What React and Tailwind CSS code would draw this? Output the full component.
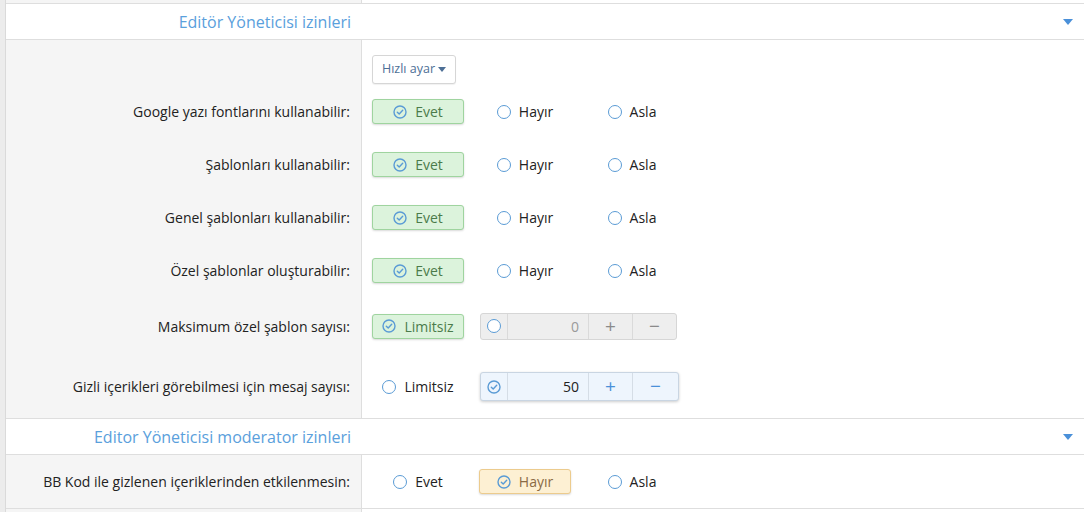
import React from 'react';

const CheckCircle = ({ color = '#5a9bd5' }) => (
    <svg width="14" height="14" viewBox="0 0 14 14" fill="none">
        <circle cx="7" cy="7" r="6" stroke={color} strokeWidth="1.4" />
        <path d="M4.3 7.2 L6.2 9 L9.7 5.3" stroke={color} strokeWidth="1.4" strokeLinecap="round" strokeLinejoin="round" />
    </svg>
);

const Radio = () => (
    <span className="inline-block w-[14px] h-[14px] rounded-full border-[1.5px] border-[#5a9bd5] bg-white" />
);

const Option = ({ label, state }) => {
    if (state === 'yes') {
        return (
            <div className="min-w-[92px] h-[25px] px-[8px] flex items-center justify-center gap-[8px] rounded-[3px] border border-[#9fd49f] bg-[#dcf3dc] text-[#4b7b4b] shadow-[0_1px_2px_rgba(0,0,0,0.15)]">
                <CheckCircle />
                <span>{label}</span>
            </div>
        );
    }
    if (state === 'no') {
        return (
            <div className="min-w-[92px] h-[25px] px-[8px] flex items-center justify-center gap-[8px] rounded-[3px] border border-[#eccb8d] bg-[#fdf0d3] text-[#8a6a45] shadow-[0_1px_2px_rgba(0,0,0,0.15)]">
                <CheckCircle />
                <span>{label}</span>
            </div>
        );
    }
    return (
        <div className="min-w-[92px] h-[25px] px-[8px] flex items-center justify-center gap-[8px] text-[#222]">
            <Radio />
            <span>{label}</span>
        </div>
    );
};

const NumberBox = ({ value, active }) => (
    <div
        className={
            active
                ? 'flex h-[29px] w-[199px] rounded-[3px] border border-[#c9d5e2] bg-[#eef5fd] shadow-[0_1px_3px_rgba(0,0,0,0.2)]'
                : 'flex h-[27px] w-[197px] rounded-[3px] border border-[#d6d6d6] bg-[#eeeeee]'
        }
    >
        <div className={active ? 'w-[27px] flex items-center justify-center border-r border-[#d5dde6]' : 'w-[27px] flex items-center justify-center border-r border-[#dadada]'}>
            {active ? <CheckCircle /> : <Radio />}
        </div>
        <div className={active ? 'w-[80px] flex items-center justify-end pr-[9px] text-[#222]' : 'w-[80px] flex items-center justify-end pr-[9px] text-[#9a9a9a]'}>
            {value}
        </div>
        <div className={active ? 'w-[44px] flex items-center justify-center border-l border-[#d5dde6] text-[#4a90d9] text-[19px]' : 'w-[44px] flex items-center justify-center border-l border-[#dadada] text-[#8a8a8a] text-[19px]'}>
            +
        </div>
        <div className={active ? 'flex-1 flex items-center justify-center border-l border-[#d5dde6] text-[#4a90d9] text-[19px]' : 'flex-1 flex items-center justify-center border-l border-[#dadada] text-[#8a8a8a] text-[19px]'}>
            −
        </div>
    </div>
);

const Caret = () => (
    <svg width="10" height="6" viewBox="0 0 10 6">
        <path d="M0 0 L10 0 L5 6 Z" fill="#4a90d9" />
    </svg>
);

const Header = ({ title, top }) => (
    <div className={top ? 'flex items-center h-[37px] border-y border-[#dedede] bg-white' : 'flex items-center h-[36px] border-b border-[#dedede] bg-white'}>
        <div className="w-[356px] pr-[11px] text-right text-[16px] text-[#5aa0dc]">{title}</div>
        <div className="flex-1 flex justify-end pr-[11px]">
            <Caret />
        </div>
    </div>
);

const Row = ({ label, h, children }) => (
    <div className="flex" style={{ height: h }}>
        <div className="w-[356px] border-r border-[#dedede] bg-[#f5f5f5] flex items-center justify-end pr-[11px] text-[#222]">
            {label}
        </div>
        <div className="flex-1 flex items-center pl-[10px] gap-[15px]">{children}</div>
    </div>
);

const ynRows = [
    'Google yazı fontlarını kullanabilir:',
    'Şablonları kullanabilir:',
    'Genel şablonları kullanabilir:',
    'Özel şablonlar oluşturabilir:',
];

export default function App() {
    return (
        <div className="flex h-[512px] w-[1084px] bg-white text-[14px] font-['Open_Sans','Noto_Sans',sans-serif] overflow-hidden">
            <div className="w-[6px] shrink-0 bg-[#ececec] border-r border-[#dadada]" />
            <div className="flex-1 flex flex-col">
                <div className="flex h-[4px] border-b border-[#dedede]">
                    <div className="w-[356px] border-r border-[#dedede] bg-[#f5f5f5]" />
                </div>
                <Header title="Editör Yöneticisi izinleri" />
                <div className="flex h-[45px]">
                    <div className="w-[356px] border-r border-[#dedede] bg-[#f5f5f5]" />
                    <div className="flex-1 pl-[10px] pt-[15px]">
                        <button className="h-[29px] w-[84px] flex items-center justify-center gap-[3px] rounded-[3px] border border-[#d6d6d6] bg-white text-[12.5px] text-[#4d6f96] shadow-[0_1px_1px_rgba(0,0,0,0.06)]">
                            Hızlı ayar
                            <svg width="8" height="5" viewBox="0 0 8 5"><path d="M0 0 L8 0 L4 5 Z" fill="#4d6f96" /></svg>
                        </button>
                    </div>
                </div>
                {ynRows.map((label) => (
                    <Row key={label} label={label} h={53}>
                        <Option label="Evet" state="yes" />
                        <Option label="Hayır" />
                        <Option label="Asla" />
                    </Row>
                ))}
                <Row label="Maksimum özel şablon sayısı:" h={58}>
                    <Option label="Limitsiz" state="yes" />
                    <div className="ml-[1px]"><NumberBox value="0" /></div>
                </Row>
                <Row label="Gizli içerikleri görebilmesi için mesaj sayısı:" h={63}>
                    <Option label="Limitsiz" />
                    <div className="ml-[1px]"><NumberBox value="50" active /></div>
                </Row>
                <Header title="Editor Yöneticisi moderator izinleri" top />
                <div className="border-b border-[#dedede]">
                    <Row label="BB Kod ile gizlenen içeriklerinden etkilenmesin:" h={53}>
                        <Option label="Evet" />
                        <Option label="Hayır" state="no" />
                        <Option label="Asla" />
                    </Row>
                </div>
                <div className="flex flex-1">
                    <div className="w-[356px] border-r border-[#dedede] bg-[#f5f5f5]" />
                </div>
            </div>
        </div>
    );
}
